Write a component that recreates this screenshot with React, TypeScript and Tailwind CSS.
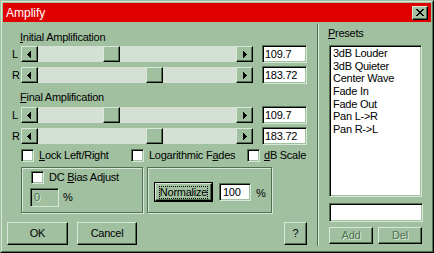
import React from "react";

const raised =
  "border border-t-[#d8e8d8] border-l-[#d8e8d8] border-r-black border-b-black shadow-[inset_-1px_-1px_0_#507050] bg-[#a0c0a0]";
const sunken =
  "border border-t-[#507050] border-l-[#507050] border-r-[#d8e8d8] border-b-[#d8e8d8] shadow-[inset_1px_1px_0_#000,inset_-1px_-1px_0_#a0c0a0]";
const etched = "border border-[#507050] shadow-[1px_1px_0_#d8e8d8,inset_1px_1px_0_#d8e8d8]";
const disabledText = "text-[#507050] [text-shadow:1px_1px_0_#d8e8d8]";

function Arrow({ dir }: { dir: "left" | "right" }) {
  const rows = [0, 1, 2, 3, 4, 5, 6];
  return (
    <svg width="4" height="7" viewBox="0 0 4 7" shapeRendering="crispEdges">
      {rows.map((r) => {
        const w = 4 - Math.abs(r - 3);
        return <rect key={r} x={dir === "left" ? 4 - w : 0} y={r} width={w} height={1} fill="#000" />;
      })}
    </svg>
  );
}

function CloseX() {
  const px: [number, number, number][] = [
    [0, 0, 2], [6, 0, 2],
    [1, 1, 2], [5, 1, 2],
    [2, 2, 4],
    [3, 3, 2],
    [2, 4, 4],
    [1, 5, 2], [5, 5, 2],
    [0, 6, 2], [6, 6, 2],
  ];
  return (
    <svg width="8" height="7" viewBox="0 0 8 7" shapeRendering="crispEdges">
      {px.map(([x, y, w], i) => (
        <rect key={i} x={x} y={y} width={w} height={1} fill="#000" />
      ))}
    </svg>
  );
}

function HScroll({ thumb }: { thumb: number }) {
  return (
    <div className="flex h-[16px] w-[232px] bg-[#d4e0d4]">
      <div className={"w-[17px] h-[16px] flex items-center justify-center pr-[1px] " + raised}>
        <Arrow dir="left" />
      </div>
      <div className="flex-1 flex">
        <div className={"w-[17px] h-[16px] " + raised} style={{ marginLeft: thumb }} />
      </div>
      <div className={"w-[17px] h-[16px] flex items-center justify-center pl-[1px] " + raised}>
        <Arrow dir="right" />
      </div>
    </div>
  );
}

function SliderRow({ label, thumb, value, className }: { label: string; thumb: number; value: string; className: string }) {
  return (
    <div className={"flex items-center h-[18px] pl-[9px] " + className}>
      <div className="w-[9px]">{label}</div>
      <HScroll thumb={thumb} />
      <div className={"ml-[9px] w-[45px] h-[18px] bg-white pl-[2px] flex items-center " + sunken}>{value}</div>
    </div>
  );
}

function Check() {
  return <div className={"w-[13px] h-[13px] bg-white shrink-0 " + sunken} />;
}

export default function App() {
  const presets = ["3dB Louder", "3dB Quieter", "Center Wave", "Fade In", "Fade Out", "Pan L->R", "Pan R->L"];
  return (
    <div className="w-[434px] h-[253px] font-['Liberation_Sans',Arial,sans-serif] text-[11px] leading-[13px] tracking-[-0.25px] text-black bg-[#a0c0a0]">
      <div className="w-full h-full border border-t-[#a0c0a0] border-l-[#a0c0a0] border-r-black border-b-black">
        <div className="w-full h-full border border-t-[#d8e8d8] border-l-[#d8e8d8] border-r-[#507050] border-b-[#507050] p-[1px] flex flex-col">
          {/* Title bar */}
          <div className="h-[19px] bg-[#e00000] flex items-center pl-[3px] shrink-0">
            <div className="text-white text-[12px] leading-[14px] tracking-normal flex-1">Amplify</div>
            <div className={"w-[16px] h-[14px] flex items-center justify-center mr-[3px] " + raised}>
              <CloseX />
            </div>
          </div>
          {/* Body */}
          <div className="flex flex-1">
            {/* Left column */}
            <div className="w-[314px] flex flex-col">
              <div className="mt-[9px] pl-[17px]">
                <span className="underline">I</span>nitial Amplification
              </div>
              <SliderRow label="L" thumb={65} value="109.7" className="mt-[1px]" />
              <SliderRow label="R" thumb={108} value="183.72" className="mt-[3px]" />
              <div className="mt-[7px] pl-[17px]">
                <span className="underline">F</span>inal Amplification
              </div>
              <SliderRow label="L" thumb={65} value="109.7" className="mt-[2px]" />
              <SliderRow label="R" thumb={108} value="183.72" className="mt-[3px]" />

              {/* Checkbox row */}
              <div className="mt-[4px] pl-[18px] flex items-center h-[13px]">
                <div className="w-[110px] flex items-center">
                  <Check />
                  <span className="ml-[5px]">
                    <span className="underline">L</span>ock Left/Right
                  </span>
                </div>
                <div className="w-[116px] flex items-center">
                  <Check />
                  <span className="ml-[5px]">
                    Logarithmic F<span className="underline">a</span>des
                  </span>
                </div>
                <div className="flex items-center">
                  <Check />
                  <span className="ml-[4px]">
                    <span className="underline">d</span>B Scale
                  </span>
                </div>
              </div>

              {/* Group boxes */}
              <div className="mt-[5px] pl-[18px] flex gap-[4px]">
                <div className={"w-[122px] h-[46px] pl-[9px] pt-[3px] flex flex-col " + etched}>
                  <div className="flex items-center h-[13px]">
                    <Check />
                    <span className="ml-[5px]">
                      DC <span className="underline">B</span>ias Adjust
                    </span>
                  </div>
                  <div className="mt-[4px] flex items-center -ml-[1px]">
                    <div className={"w-[29px] h-[19px] pl-[3px] flex items-center bg-[#a0c0a0] " + sunken}>
                      <span className={disabledText}>0</span>
                    </div>
                    <span className="ml-[4px]">%</span>
                  </div>
                </div>
                <div className={"w-[125px] h-[46px] pl-[6px] pt-[14px] flex items-start " + etched}>
                  <div className="w-[59px] h-[20px] border border-black">
                    <div className={"w-full h-full flex items-center justify-center " + raised}>
                      <span className="border border-dotted border-black px-[0px] leading-[11px]">Normalize</span>
                    </div>
                  </div>
                  <div className={"ml-[6px] mt-[1px] w-[32px] h-[18px] bg-white pl-[3px] flex items-center " + sunken}>100</div>
                  <span className="ml-[5px] mt-[5px]">%</span>
                </div>
              </div>

              {/* Buttons */}
              <div className="mt-[9px] pl-[4px] flex">
                <div className={"w-[61px] h-[23px] flex items-center justify-center " + raised}>OK</div>
                <div className={"ml-[9px] w-[60px] h-[23px] flex items-center justify-center " + raised}>Cancel</div>
                <div className={"ml-[147px] w-[23px] h-[23px] flex items-center justify-center " + raised}>?</div>
              </div>
            </div>

            {/* Separator */}
            <div className="mt-[2px] h-[222px] w-[2px] border-l border-l-[#507050] border-r border-r-[#d8e8d8]" />

            {/* Right column */}
            <div className="flex-1 flex flex-col pl-[10px]">
              <div className="mt-[5px] -ml-[1px]">
                <span className="underline">P</span>resets
              </div>
              <div className={"mt-[5px] w-[93px] h-[152px] bg-white pl-[3px] pt-[1px] " + sunken}>
                {presets.map((p) => (
                  <div key={p} className="leading-[12.7px] h-[12.7px]">
                    {p}
                  </div>
                ))}
              </div>
              <div className={"mt-[6px] w-[94px] h-[19px] bg-white " + sunken} />
              <div className="mt-[5px] flex gap-[5px]">
                <div className={"w-[44px] h-[17px] flex items-center justify-center " + raised}>
                  <span className={disabledText}>Add</span>
                </div>
                <div className={"w-[44px] h-[17px] flex items-center justify-center " + raised}>
                  <span className={disabledText}>Del</span>
                </div>
              </div>
            </div>
          </div>
        </div>
      </div>
    </div>
  );
}
